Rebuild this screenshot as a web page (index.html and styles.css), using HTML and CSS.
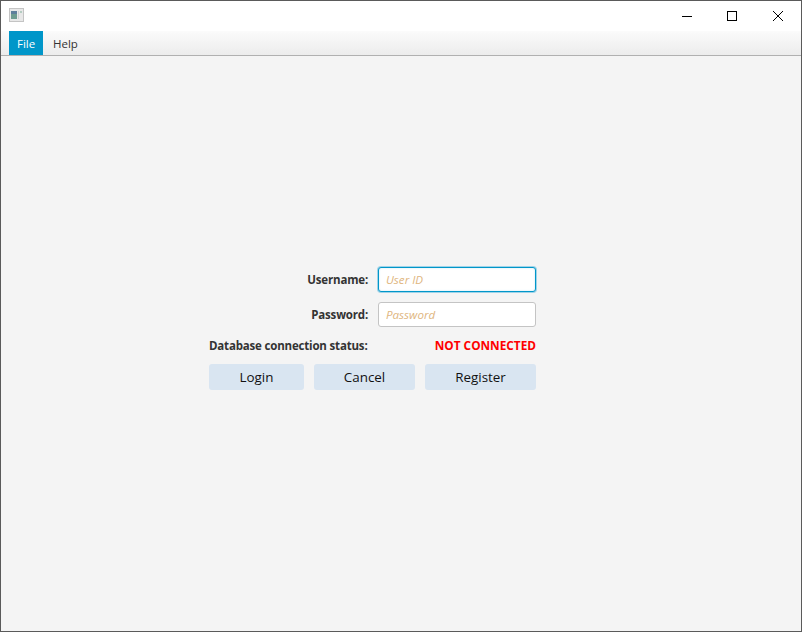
FILE: index.html
```html
<!DOCTYPE html>
<html lang="en">
<head>
<meta charset="utf-8">
<title>Login</title>
<link rel="stylesheet" href="styles.css">
</head>
<body>
<div class="window">
  <header class="titlebar">
    <svg class="app-icon" width="16" height="16" viewBox="0 0 16 16">
      <rect x="0.5" y="0.5" width="14" height="13" fill="#e8e8e8" stroke="#c4c4c4"/>
      <rect x="2" y="3" width="6" height="8" fill="#6f9c90"/>
      <rect x="2" y="3" width="6" height="3" fill="#5f7f9c"/>
      <rect x="9" y="3" width="1" height="8" fill="#cfcfcf"/>
      <rect x="11" y="3" width="2" height="2" fill="#b4ccc1"/>
    </svg>
    <div class="controls">
      <svg class="ctl" width="45" height="30" viewBox="0 0 45 30"><path d="M18 15.5h10" stroke="#000" fill="none"/></svg>
      <svg class="ctl" width="46" height="30" viewBox="0 0 46 30"><rect x="18.5" y="10.5" width="9" height="9" stroke="#000" fill="none"/></svg>
      <svg class="ctl" width="46" height="30" viewBox="0 0 46 30"><path d="M18 10l10 10M28 10l-10 10" stroke="#000" fill="none"/></svg>
    </div>
  </header>
  <nav class="menubar">
    <span class="menu menu-active">File</span>
    <span class="menu">Help</span>
  </nav>
  <main class="content">
    <form class="form">
      <label class="label">Username:</label>
      <input class="field field-focus" type="text" placeholder="User ID">
      <label class="label">Password:</label>
      <input class="field" type="password" placeholder="Password">
      <span class="label label-left">Database connection status:</span>
      <span class="status">NOT CONNECTED</span>
      <div class="buttons">
        <button class="btn btn-login" type="button">Login</button>
        <button class="btn btn-cancel" type="button">Cancel</button>
        <button class="btn btn-register" type="button">Register</button>
      </div>
    </form>
  </main>
</div>
</body>
</html>
```
FILE: styles.css
```css
* { box-sizing: border-box; }
html, body { margin: 0; height: 100%; }
body { font-family: "Open Sans", "Noto Sans", "Liberation Sans", sans-serif; color: #333; }
.window {
  width: 802px; height: 632px;
  border: 1px solid #5a5a5a;
  display: flex; flex-direction: column;
  background: #f4f4f4;
  overflow: hidden;
}
.titlebar { height: 30px; background: #fff; display: flex; align-items: center; justify-content: space-between; flex: none; }
.app-icon { margin-left: 8px; }
.controls { display: flex; }
.ctl { display: block; }
.menubar {
  height: 25px; flex: none;
  display: flex; padding-left: 8px;
  background: linear-gradient(#fbfbfb, #ececec);
  border-bottom: 1px solid #b0b0b0;
}
.menu { height: 24px; padding: 0 8px 0 10px; font-size: 11.5px; line-height: 25px; color: #333; }
.menu-active { background: #0096c9; color: #fff; padding: 0 8px; width: 34px; }
.content { flex: 1; display: flex; align-items: center; justify-content: center; padding: 0 57px 30px 0; }
.form { width: 327px; display: grid; grid-template-columns: 159px 158px; gap: 10px; align-items: center; }
.label { font-size: 11.5px; font-weight: 700; letter-spacing: -0.18px; text-align: right; color: #333; white-space: nowrap; }
.label-left { text-align: left; }
.field {
  height: 25px; width: 158px; padding: 0 7px 1px;
  font-family: inherit; font-size: 11.6px; font-style: italic;
  background: #fff; border: 1px solid #c4c4c4; border-radius: 3px; outline: none;
}
.field::placeholder { color: #e0b680; opacity: 1; }
.field-focus { border: 1px solid #0096c9; box-shadow: 0 0 0 1px #9fd3e8, inset 0 0 2px #bfe3f1; }
.status { font-size: 11.8px; font-weight: 700; color: #f00; text-align: right; white-space: nowrap; height: 17px; line-height: 17px; }
.buttons { grid-column: 1 / -1; display: flex; gap: 10px; }
.btn {
  height: 26px; padding: 0;
  font-family: inherit; font-size: 13.4px; color: #111;
  background: #d9e5f1; border: 0; border-radius: 3px;
}
.btn-login { width: 95px; }
.btn-cancel { width: 101px; }
.btn-register { width: 111px; }
```
